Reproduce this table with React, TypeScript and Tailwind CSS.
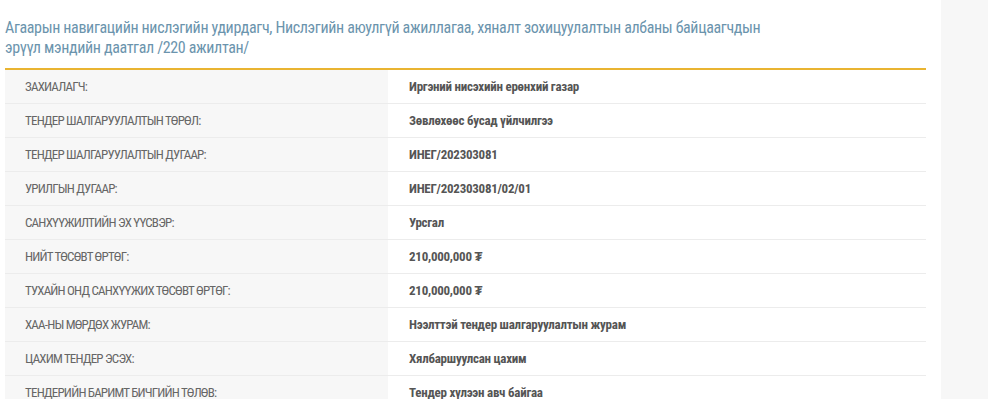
const rows: [string, string][] = [
  ["ЗАХИАЛАГЧ:", "Иргэний нисэхийн ерөнхий газар"],
  ["ТЕНДЕР ШАЛГАРУУЛАЛТЫН ТӨРӨЛ:", "Зөвлөхөөс бусад үйлчилгээ"],
  ["ТЕНДЕР ШАЛГАРУУЛАЛТЫН ДУГААР:", "ИНЕГ/202303081"],
  ["УРИЛГЫН ДУГААР:", "ИНЕГ/202303081/02/01"],
  ["САНХҮҮЖИЛТИЙН ЭХ ҮҮСВЭР:", "Урсгал"],
  ["НИЙТ ТӨСӨВТ ӨРТӨГ:", "210,000,000 ₮"],
  ["ТУХАЙН ОНД САНХҮҮЖИХ ТӨСӨВТ ӨРТӨГ:", "210,000,000 ₮"],
  ["ХАА-НЫ МӨРДӨХ ЖУРАМ:", "Нээлттэй тендер шалгаруулалтын журам"],
  ["ЦАХИМ ТЕНДЕР ЭСЭХ:", "Хялбаршуулсан цахим"],
  ["ТЕНДЕРИЙН БАРИМТ БИЧГИЙН ТӨЛӨВ:", "Тендер хүлээн авч байгаа"],
]

export default function App() {
  return (
    <div
      className="flex h-[399px] w-[988px] overflow-hidden bg-white"
      style={{ fontFamily: '"Liberation Sans Narrow", "Roboto Condensed", "Liberation Sans", sans-serif' }}
    >
      <div className="w-[941px] shrink-0 pl-[5px] pr-[15px]">
        {/* Title */}
        <h2 className="mt-[18px] w-[770px] text-[16px] leading-[20px] tracking-[-0.35px] text-[#6b94ad]">
          Агаарын навигацийн нислэгийн удирдагч, Нислэгийн аюулгүй ажиллагаа, хяналт зохицуулалтын албаны байцаагчдын
          эрүүл мэндийн даатгал /220 ажилтан/
        </h2>

        {/* Info table */}
        <div className="mt-[10px] border-t-2 border-[#e9b431]">
          {rows.map(([label, value]) => (
            <div key={label} className="flex h-[34px] border-b border-[#ececec]">
              <div className="flex w-[383px] shrink-0 items-center bg-[#f7f7f7] pl-[20px] text-[13px] tracking-[-0.8px] text-[#666]">
                {label}
              </div>
              <div className="flex flex-1 items-center pl-[21px] text-[13px] font-bold tracking-[-0.25px] text-[#555]">
                {value}
              </div>
            </div>
          ))}
        </div>
      </div>

      {/* Right rail */}
      <div className="flex-1 bg-[#f7f7f7]" />
    </div>
  )
}
